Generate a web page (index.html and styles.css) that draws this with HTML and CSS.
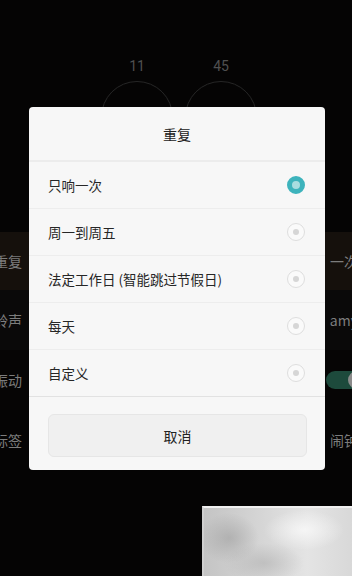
FILE: index.html
```html
<!DOCTYPE html>
<html lang="zh">
<head>
<meta charset="utf-8">
<link rel="stylesheet" href="styles.css">
</head>
<body>
<div class="screen">
  <div class="top">
    <div class="dial">
      <span class="num">11</span>
      <span class="arc"></span>
    </div>
    <div class="dial">
      <span class="num">45</span>
      <span class="arc"></span>
    </div>
  </div>
  <div class="list">
    <div class="row r1"><span class="lbl">重复</span><span class="val">一次</span></div>
    <div class="row r2"><span class="lbl">铃声</span><span class="val">amy</span></div>
    <div class="row r3"><span class="lbl">振动</span><span class="toggle"><span class="knob"></span></span></div>
    <div class="row r4"><span class="lbl">标签</span><span class="val">闹钟</span></div>
  </div>

  <div class="dialog">
    <div class="title">重复</div>
    <div class="options">
      <div class="opt"><span>只响一次</span><span class="radio on"></span></div>
      <div class="opt"><span>周一到周五</span><span class="radio"></span></div>
      <div class="opt"><span>法定工作日 (智能跳过节假日)</span><span class="radio"></span></div>
      <div class="opt"><span>每天</span><span class="radio"></span></div>
      <div class="opt last"><span>自定义</span><span class="radio"></span></div>
    </div>
    <div class="footer">
      <div class="cancel">取消</div>
    </div>
  </div>

  <div class="watermark"></div>
</div>
</body>
</html>
```
FILE: styles.css
```css
* { box-sizing: border-box; }
html, body {
  margin: 0;
  padding: 0;
  width: 352px;
  height: 576px;
  overflow: hidden;
  background: #050404;
  font-family: "Noto Sans CJK SC", "Noto Sans", sans-serif;
}
.screen {
  position: relative;
  width: 352px;
  height: 576px;
  background: #050404;
  overflow: hidden;
}
.top {
  display: flex;
  justify-content: center;
  gap: 12px;
  padding-top: 55px;
  padding-left: 6px;
  height: 232px;
}
.dial {
  width: 72px;
  display: flex;
  flex-direction: column;
  align-items: center;
}
.num {
  color: #505050;
  font-family: "Roboto", sans-serif;
  font-size: 14px;
  line-height: 22px;
}
.arc {
  margin-top: 4px;
  width: 72px;
  height: 72px;
  border-radius: 50%;
  border: 1.5px solid #262626;
}
.list {
  display: flex;
  flex-direction: column;
}
.row {
  height: 60px;
  display: flex;
  align-items: center;
  justify-content: space-between;
  margin: 0 -6px;
  color: #7c7c7c;
  font-size: 14px;
}
.r1 { background: #15100c; height: 58px; }
.r2 { background: #0a0909; }
.r3 { background: #060505; }
.r4 { background: #050404; }
.val { color: #7c7c7c; }
.toggle {
  width: 40px;
  height: 18px;
  border-radius: 9px;
  background: #1d4a3c;
  display: flex;
  justify-content: flex-end;
  margin-right: -8px;
}
.knob {
  width: 18px;
  height: 18px;
  border-radius: 50%;
  background: #8a8a8a;
}
.dialog {
  position: absolute;
  left: 29px;
  top: 107px;
  width: 296px;
  height: 363px;
  background: #f7f7f7;
  border-radius: 4px;
  display: flex;
  flex-direction: column;
}
.title {
  height: 55px;
  display: flex;
  align-items: center;
  justify-content: center;
  font-size: 14px;
  color: #222;
  border-bottom: 2px solid #ececec;
}
.options {
  display: flex;
  flex-direction: column;
}
.opt {
  height: 47px;
  display: flex;
  align-items: center;
  justify-content: space-between;
  padding: 0 20px 0 19px;
  font-size: 13.5px;
  color: #262626;
  border-bottom: 1px solid #ededed;
}
.opt.last { border-bottom: 1.5px solid #e2e2e2; }
.radio {
  width: 18px;
  height: 18px;
  border-radius: 50%;
  border: 1.5px solid #dedede;
  display: flex;
  align-items: center;
  justify-content: center;
  background: #fafafa;
}
.radio::after {
  content: "";
  width: 6px;
  height: 6px;
  border-radius: 50%;
  background: #d6d6d6;
}
.radio.on {
  border: 5px solid #3db3bc;
  background: #a9dde0;
}
.radio.on::after { display: none; }
.footer {
  flex: 1;
  padding: 17px 18px 0 19px;
}
.cancel {
  height: 43px;
  border-radius: 6px;
  background: #f0f0f0;
  border: 1px solid #e6e6e6;
  display: flex;
  align-items: center;
  justify-content: center;
  font-size: 14px;
  color: #222;
}
.watermark {
  position: absolute;
  left: 202px;
  top: 506px;
  width: 150px;
  height: 70px;
  background:
    radial-gradient(ellipse 40px 20px at 100px 22px, rgba(250,250,250,0.8), rgba(250,250,250,0) 100%),
    radial-gradient(ellipse 30px 25px at 25px 30px, rgba(160,160,160,0.6), rgba(160,160,160,0) 100%),
    radial-gradient(ellipse 40px 20px at 60px 55px, rgba(170,170,170,0.5), rgba(170,170,170,0) 100%),
    linear-gradient(90deg, #c4c4c4 0%, #d6d6d6 40%, #e4e4e4 70%, #d8d8d8 100%);
  border-top: 2px solid #f0f0f0;
  border-left: 2px solid #cfcfcf;
}
```
